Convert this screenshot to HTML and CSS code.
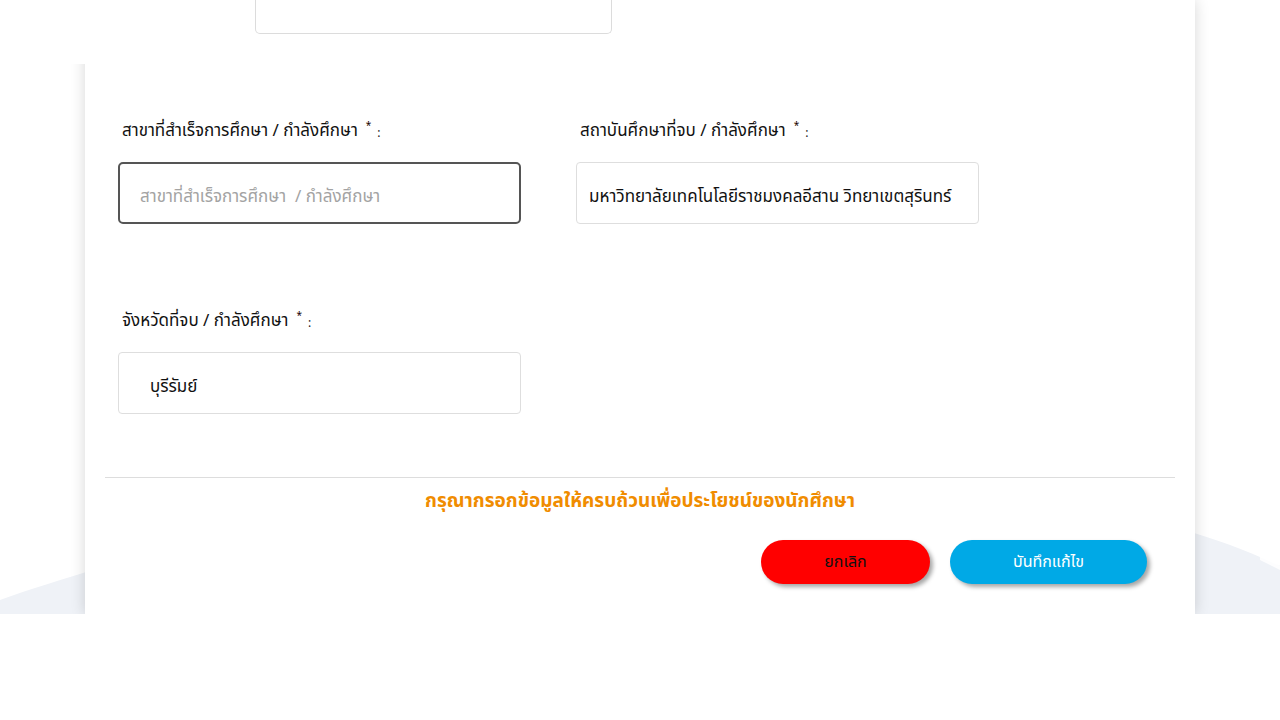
FILE: index.html
```html
<!DOCTYPE html>
<html lang="th">
<head>
<meta charset="utf-8">
<title>แก้ไขข้อมูลการศึกษา</title>
<link rel="stylesheet" href="styles.css">
</head>
<body>
<div class="stage">
  <svg class="wave" width="1280" height="120" viewBox="0 0 1280 120" preserveAspectRatio="none" aria-hidden="true">
    <path d="M0 106 C 30 95, 60 86, 100 74 L 100 120 L 0 120 Z" fill="#eff2f7"/>
    <path d="M1180 35 C 1220 46, 1250 58, 1280 72 L 1280 120 L 1180 120 Z" fill="#eff2f7"/>
    <path d="M1259 44 L 1263 62 L 1280 72 L 1280 76 L 1260 66 Z" fill="#ffffff" opacity="0.85"/>
  </svg>
  <div class="top-cover"></div>
  <main class="card">
    <div class="prev-field"></div>
    <form class="form">
      <div class="grid">
        <div class="field">
          <label class="label">สาขาที่สำเร็จการศึกษา / กำลังศึกษา<span class="req">*</span><span class="colon">:</span></label>
          <input class="input input-focus" type="text" placeholder="สาขาที่สำเร็จการศึกษา  / กำลังศึกษา">
        </div>
        <div class="field">
          <label class="label">สถาบันศึกษาที่จบ / กำลังศึกษา<span class="req">*</span><span class="colon">:</span></label>
          <input class="input" type="text" value="มหาวิทยาลัยเทคโนโลยีราชมงคลอีสาน วิทยาเขตสุรินทร์">
        </div>
        <div class="field">
          <label class="label">จังหวัดที่จบ / กำลังศึกษา<span class="req">*</span><span class="colon">:</span></label>
          <div class="input select">บุรีรัมย์</div>
        </div>
      </div>
    </form>
    <hr class="divider">
    <p class="notice">กรุณากรอกข้อมูลให้ครบถ้วนเพื่อประโยชน์ของนักศึกษา</p>
    <div class="actions">
      <button class="btn btn-cancel" type="button">ยกเลิก</button>
      <button class="btn btn-save" type="button">บันทึกแก้ไข</button>
    </div>
  </main>
</div>
</body>
</html>
```

FILE: styles.css
```css
* { box-sizing: border-box; }
html, body { margin: 0; padding: 0; background: #ffffff; }
body {
  font-family: "Noto Sans Thai", "Noto Sans", "DejaVu Sans", sans-serif;
  color: #111;
}
.stage {
  position: relative;
  height: 614px;
  overflow: hidden;
  background: #ffffff;
}
.wave {
  position: absolute;
  left: 0;
  bottom: 0;
  z-index: 0;
}
.top-cover {
  position: absolute;
  left: 0;
  top: 0;
  width: 255px;
  height: 64px;
  background: #ffffff;
  z-index: 2;
}
.card {
  position: relative;
  z-index: 1;
  width: 1110px;
  height: 614px;
  margin: 0 auto;
  background: #ffffff;
  box-shadow: 0 0 14px rgba(0, 0, 0, 0.16);
}
.prev-field {
  margin-left: 170px;
  width: 357px;
  height: 34px;
  border: 1px solid #dcdcdc;
  border-top: none;
  border-radius: 0 0 5px 5px;
}
.form {
  padding: 86px 0 0 33px;
}
.grid {
  display: grid;
  grid-template-columns: 403px 403px;
  column-gap: 55px;
  row-gap: 86px;
}
.field {
  display: flex;
  flex-direction: column;
}
.label {
  display: block;
  height: 22px;
  line-height: 22px;
  padding-left: 4px;
  margin-bottom: 20px;
  font-size: 17px;
  color: #111;
  white-space: nowrap;
}
.req {
  display: inline-block;
  margin-left: 8px;
  color: #1a0000;
  font-size: 10px;
  line-height: 10px;
  vertical-align: 7px;
}
.colon {
  display: inline-block;
  margin-left: 6px;
  font-size: 12px;
  color: #222;
  vertical-align: -1px;
}
.input {
  display: flex;
  align-items: center;
  width: 403px;
  height: 62px;
  border: 1px solid #dedede;
  border-radius: 4px;
  padding: 7px 12px 0 12px;
  font-family: inherit;
  font-size: 17px;
  color: #111;
  background: #ffffff;
  outline: none;
}
.input::placeholder {
  color: #a3a3a3;
}
.input-focus {
  border: 2px solid #555555;
  border-radius: 5px;
  padding-left: 20px;
}
.select {
  padding-left: 31px;
}
.divider {
  margin: 63px 20px 0 20px;
  border: none;
  border-top: 1px solid #dddddd;
  height: 0;
}
.notice {
  margin: 10px 0 0 0;
  text-align: center;
  font-size: 19px;
  font-weight: 700;
  line-height: 28px;
  color: #f08c00;
}
.actions {
  display: flex;
  justify-content: flex-end;
  gap: 20px;
  margin-top: 24px;
  padding-right: 48px;
}
.btn {
  height: 44px;
  border: none;
  border-radius: 22px;
  font-family: inherit;
  font-size: 16px;
  box-shadow: 3px 3px 4px rgba(0, 0, 0, 0.35);
  cursor: pointer;
}
.btn-cancel {
  width: 169px;
  background: #ff0000;
  color: #111;
}
.btn-save {
  width: 197px;
  background: #00a9e6;
  color: #ffffff;
}
```
